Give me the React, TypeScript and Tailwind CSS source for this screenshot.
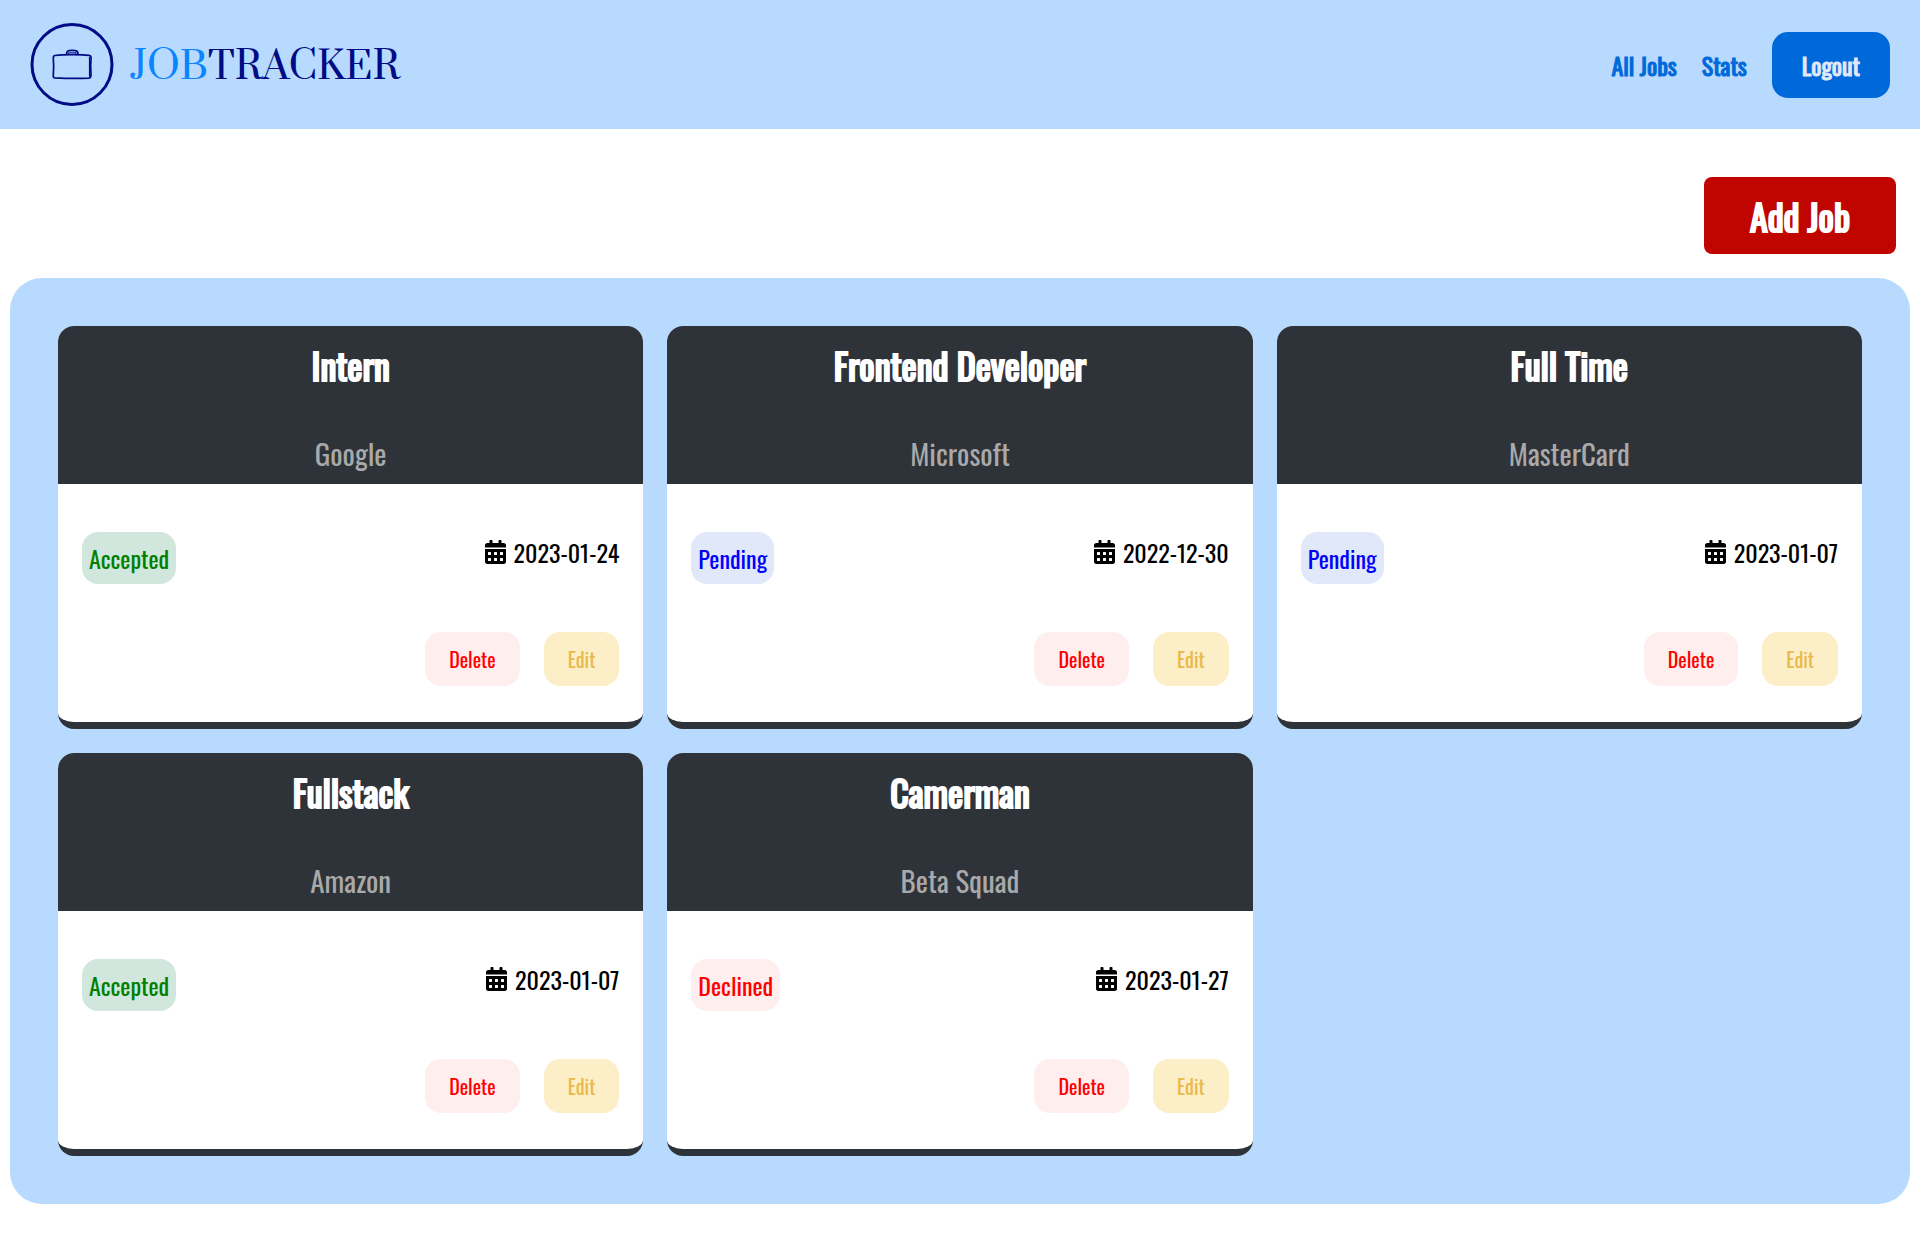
import React from "react";
import { FaCalendarAlt } from "react-icons/fa";

type Status = "Accepted" | "Pending" | "Declined";

interface Job {
  position: string;
  company: string;
  status: Status;
  date: string;
}

const jobs: Job[] = [
  { position: "Intern", company: "Google", status: "Accepted", date: "2023-01-24" },
  { position: "Frontend Developer", company: "Microsoft", status: "Pending", date: "2022-12-30" },
  { position: "Full Time", company: "MasterCard", status: "Pending", date: "2023-01-07" },
  { position: "Fullstack", company: "Amazon", status: "Accepted", date: "2023-01-07" },
  { position: "Camerman", company: "Beta Squad", status: "Declined", date: "2023-01-27" },
];

const statusStyles: Record<Status, string> = {
  Accepted: "bg-[#d1e7dd] text-[#008000]",
  Pending: "bg-[#e0e8f9] text-[#0000ff]",
  Declined: "bg-[#ffeeee] text-[#ff0000]",
};

function Logo() {
  return (
    <a href="#" className="flex items-center gap-4 text-[#000b85]">
      <svg className="h-[85px] w-21" viewBox="0 0 84 84" fill="none" stroke="currentColor" aria-hidden="true">
        <circle cx="42" cy="42" r="40" strokeWidth="3" />
        <path
          d="M25 33C34 31.800 51 31.800 59 32.800Q61.500 33.200 61 36Q60.300 43.500 61 51.500Q61.200 55.200 59 55.700Q42 56.200 24.500 55.300Q23 55 23.300 52.700Q24 43.700 23.300 35.700Q23.200 33.200 25 33Z"
          strokeWidth="1.700"
        />
        <path d="M59.500 34.500V54" strokeWidth="1.200" />
        <path d="M36.500 32.500Q36.500 28.500 39 28.200Q42 27.700 45.500 28.200Q48 28.500 48 32" strokeWidth="1.700" />
        <path d="M38.500 31.500V30.300H46V31.500" strokeWidth="1" />
      </svg>
      <span className="pt-1 font-['Prata','Liberation_Serif',serif] text-[38px] leading-none">
        <span className="text-[#0a84ff]">JOB</span>TRACKER
      </span>
    </a>
  );
}

function JobCard({ job }: { job: Job }) {
  return (
    <article className="overflow-hidden rounded-2xl border-b-[7px] border-[#2d3339] bg-white">
      <header className="flex flex-col items-center gap-[42px] bg-[#2d3339] pt-4 pb-2 text-center">
        <h2 className="text-4xl leading-[46px] text-white [-webkit-text-stroke:2px]">{job.position}</h2>
        <p className="text-[29px] leading-[46px] text-[#a9a9a9]">{job.company}</p>
      </header>
      <div className="px-6 pt-12 pb-9">
        <div className="flex items-start justify-between text-2xl">
          <span className={`rounded-2xl px-[7px] py-2 leading-9 ${statusStyles[job.status]}`}>
            {job.status}
          </span>
          <span className="flex items-center gap-2 leading-10 text-black">
            <FaCalendarAlt className="h-6 w-[21px]" aria-hidden="true" />
            <time dateTime={job.date}>{job.date}</time>
          </span>
        </div>
        <div className="mt-12 flex justify-end gap-6 text-xl leading-[30px]">
          <button type="button" className="rounded-2xl bg-[#ffeeee] px-6 py-3 text-[#ff0000]">
            Delete
          </button>
          <button type="button" className="rounded-2xl bg-[#fceec6] px-6 py-3 text-[#e9b949]">
            Edit
          </button>
        </div>
      </div>
    </article>
  );
}

export default function App() {
  return (
    <div className="min-h-screen bg-white font-['Oswald','Liberation_Sans',sans-serif]">
      <nav className="flex items-center justify-between bg-[#b8daff] px-[30px] py-[22px]">
        <Logo />
        <div className="flex items-center gap-[25px] text-2xl text-[#0069d9] [-webkit-text-stroke:1px]">
          <a href="#jobs">All Jobs</a>
          <a href="#stats">Stats</a>
          <button type="button" className="rounded-2xl bg-[#0069d9] px-[30px] py-4 leading-[34px] text-[#e0e8f9]">
            Logout
          </button>
        </div>
      </nav>
      <main className="px-[10px] pt-12">
        <div className="flex justify-end pr-[14px]">
          <button type="button" className="rounded-lg bg-[#c00500] px-[46px] py-3 text-4xl leading-[53px] text-white [-webkit-text-stroke:2px]">
            Add Job
          </button>
        </div>
        <section className="mt-6 grid grid-cols-3 gap-6 rounded-[32px] bg-[#b8daff] p-12">
          {jobs.map((job) => (
            <JobCard key={job.position} job={job} />
          ))}
        </section>
      </main>
    </div>
  );
}
